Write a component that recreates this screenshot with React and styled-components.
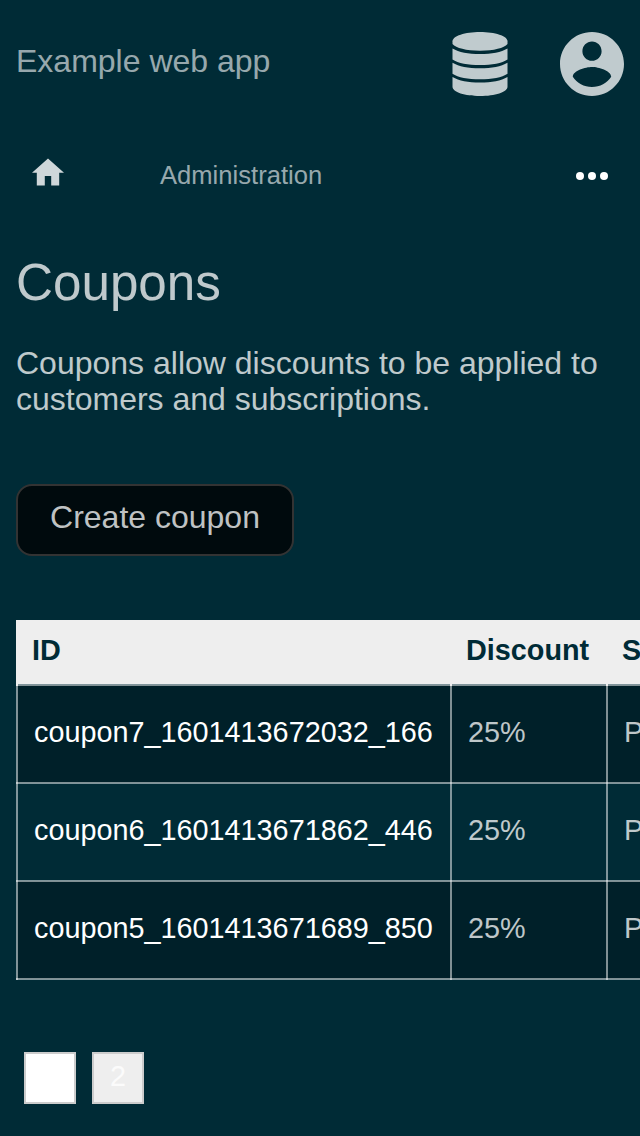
import React from "react";
import styled, { createGlobalStyle } from "styled-components";

const GlobalStyle = createGlobalStyle`
  *, *::before, *::after { box-sizing: border-box; }
  html, body { margin: 0; background: #002b36; }
  body {
    overflow: hidden;
    height: 1136px;
    color: rgba(255, 255, 255, 0.75);
    font-family: "Liberation Sans", Arial, sans-serif;
    font-size: 32px;
  }
`;

const Header = styled.header`
  display: flex;
  align-items: center;
  justify-content: space-between;
  height: 128px;
  padding: 0 16px;
`;

const AppTitle = styled.a`
  color: rgba(255, 255, 255, 0.6);
  line-height: 36px;
  padding-bottom: 6px;
`;

const Menus = styled.div`
  display: flex;
  gap: 52px;
`;

const Icon = styled.svg`
  display: block;
  width: ${(p) => p.$w}px;
  height: ${(p) => p.$h}px;
  fill: ${(p) => p.$color || "#c0cbce"};
`;

const NavBar = styled.nav`
  display: flex;
  align-items: center;
  height: 96px;
  padding: 0 32px;
`;

const HomeLink = styled.a`
  width: 128px;
  padding-bottom: 8px;
`;

const NavLink = styled.a`
  flex: 1;
  color: rgba(255, 255, 255, 0.6);
  font-size: 25.6px;
  line-height: 30px;
  padding-bottom: 2px;
`;

const Content = styled.main`
  padding: 29px 0 0 16px;
`;

const Title = styled.h1`
  margin: 0;
  font-size: 51.2px;
  font-weight: 400;
  line-height: 60px;
`;

const Intro = styled.p`
  margin: 32px 16px 0 0;
  line-height: 36px;
`;

const CreateButton = styled.button`
  display: block;
  margin-top: 67px;
  width: 278px;
  height: 72px;
  padding: 0 0 6px;
  border: 2px solid #333;
  border-radius: 16px;
  background: #000a0d;
  color: #bfc2c3;
  font: inherit;
`;

const TableWrap = styled.div`
  margin-top: 64px;
  overflow: hidden;
`;

const Table = styled.table`
  width: 860px;
  table-layout: fixed;
  border-collapse: collapse;
  font-size: 28.8px;
  line-height: 34px;
`;

const HeadCell = styled.th`
  width: ${(p) => p.$w}px;
  height: 65px;
  padding: 0 14px 5px;
  border-left: 2px solid #eee;
  background: linear-gradient(#eee, #eee) 0 0 / 100% 64px no-repeat border-box;
  color: #002b36;
  text-align: left;
`;

const Row = styled.tr`
  background: ${(p) => (p.$dark ? "#002029" : "transparent")};
`;

const Cell = styled.td`
  height: 98px;
  padding: 0 16px 4px;
  border: 2px solid rgba(255, 255, 255, 0.5);
  color: ${(p) => (p.$link ? "#fff" : "inherit")};
`;

const Pagination = styled.div`
  display: flex;
  gap: 16px;
  margin: 72px 0 0 8px;
`;

const PageLink = styled.a`
  width: 52px;
  height: 52px;
  border: 2px solid #ccc;
  background: ${(p) => (p.$current ? "#fff" : "#eee")};
  color: ${(p) => (p.$current ? "#fff" : "#fbfbfb")};
  font-size: 28.8px;
  line-height: 44px;
  text-align: center;
`;

const coupons = [
  "coupon7_1601413672032_166",
  "coupon6_1601413671862_446",
  "coupon5_1601413671689_850",
];

export default function App() {
  return (
    <>
      <GlobalStyle />
      <Header>
        <AppTitle>Example web app</AppTitle>
        <Menus>
          <Icon $w={56} $h={64} viewBox="0 0 56 64">
            <path d="M28 0C43 0 55.500 4 55.500 9.300V12C52 16 42 18.700 28 18.700S4 16 .5 12V9.300C.5 4 13 0 28 0Z" />
            <path d="M.5 16.500C7 20.300 16 22 28 22S49 20.300 55.500 16.500V27.500C50 31.300 40 33 28 33S6 31.300 .5 27.500Z" />
            <path d="M.5 30.700C7 34.500 16 36.200 28 36.200S49 34.500 55.500 30.700V41.700C50 45.500 40 47.200 28 47.200S6 45.500 .5 41.700Z" />
            <path d="M.5 44.900C7 48.700 16 50.500 28 50.500S49 48.700 55.500 44.900V54.700C55.500 60 43 64 28 64S.5 60 .5 54.700Z" />
          </Icon>
          <Icon $w={64} $h={64} viewBox="2 2 20 20">
            <path d="M12 2C6.480 2 2 6.480 2 12s4.480 10 10 10 10-4.480 10-10S17.520 2 12 2zm0 3c1.660 0 3 1.340 3 3s-1.340 3-3 3-3-1.340-3-3 1.340-3 3-3zm0 14.200c-2.500 0-4.710-1.280-6-3.220.030-1.990 4-3.080 6-3.080 1.990 0 5.970 1.090 6 3.080-1.290 1.940-3.500 3.220-6 3.220z" />
          </Icon>
        </Menus>
      </Header>
      <NavBar>
        <HomeLink>
          <Icon $w={32} $h={28} $color="#cfd7da" viewBox="2 2.75 20 17.5">
            <path d="M10 20v-6h4v6h5v-8h3L12 3 2 12h3v8z" />
          </Icon>
        </HomeLink>
        <NavLink>Administration</NavLink>
        <Icon $w={32} $h={8} $color="#fff" viewBox="0 0 32 8">
          <circle cx="4" cy="4" r="4" />
          <circle cx="16" cy="4" r="4" />
          <circle cx="28" cy="4" r="4" />
        </Icon>
      </NavBar>
      <Content>
        <Title>Coupons</Title>
        <Intro>Coupons allow discounts to be applied to customers and subscriptions.</Intro>
        <CreateButton>Create coupon</CreateButton>
        <TableWrap>
          <Table>
            <thead>
              <tr>
                <HeadCell $w={434}>ID</HeadCell>
                <HeadCell $w={156}>Discount</HeadCell>
                <HeadCell $w={270}>Status</HeadCell>
              </tr>
            </thead>
            <tbody>
              {coupons.map((id, i) => (
                <Row key={id} $dark={i % 2 === 0}>
                  <Cell $link>{id}</Cell>
                  <Cell>25%</Cell>
                  <Cell>Published</Cell>
                </Row>
              ))}
            </tbody>
          </Table>
        </TableWrap>
        <Pagination>
          <PageLink $current>1</PageLink>
          <PageLink>2</PageLink>
        </Pagination>
      </Content>
    </>
  );
}
